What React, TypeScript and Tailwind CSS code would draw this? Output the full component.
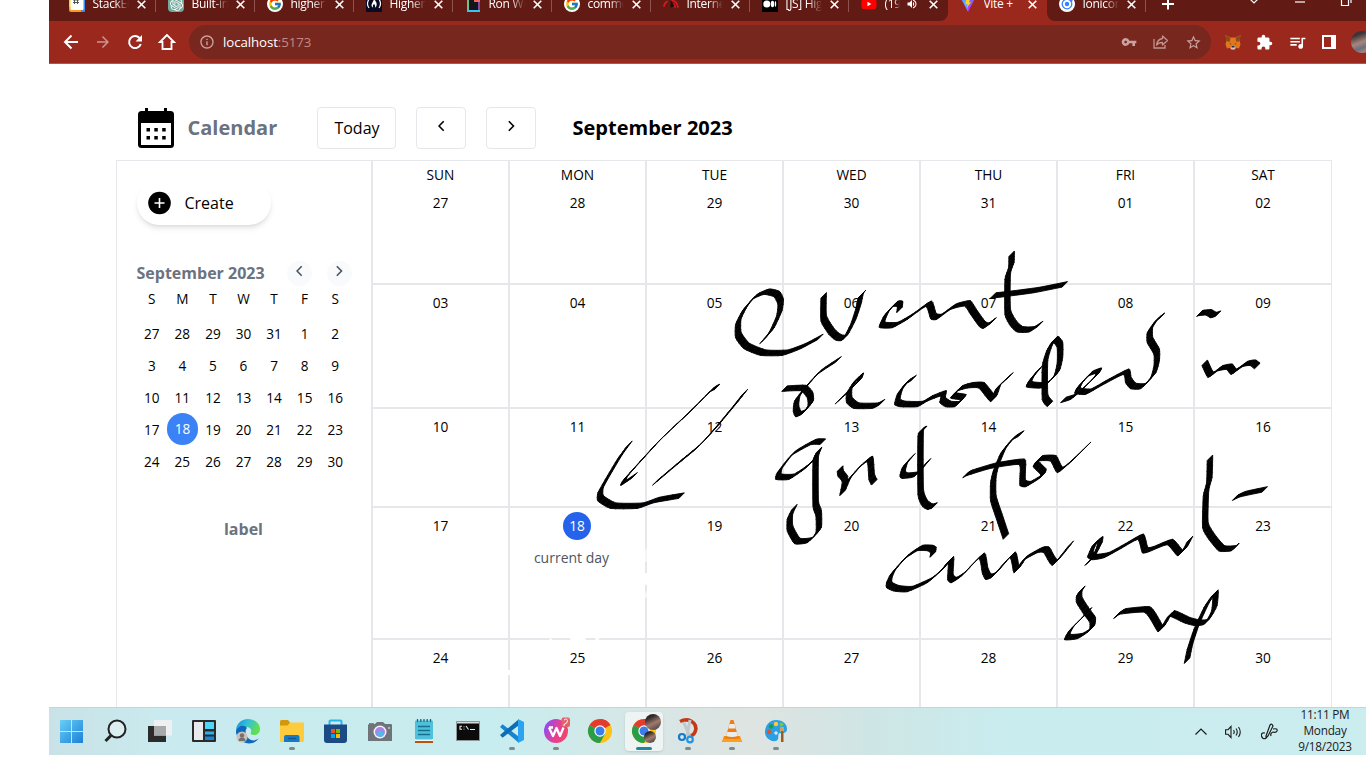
import React from "react";
import { FcGoogle } from "react-icons/fc";
import { FaYoutube } from "react-icons/fa";
import { SiOpenai } from "react-icons/si";
import {
  MdArrowForward,
  MdVpnKey,
  MdStarBorder,
  MdExtension,
  MdQueueMusic,
  MdOutlineInfo,
  MdVolumeUp,
} from "react-icons/md";

type Point = [number, number];

/* ---------- Browser chrome ---------- */

const StackEditIcon = () => (
  <svg width="16" height="16" viewBox="0 0 16 16">
    <rect width="16" height="16" rx="2" fill="#fb9a1d" />
    <path d="M0 2h3v9H0z" fill="#fbd21d" />
    <path d="M12 4h4v10a2 2 0 0 1-2 2h-2z" fill="#3f8df0" />
    <rect x="1.500" y="0" width="13" height="14" rx="1" fill="#fff" />
    <path d="M5.500 2v6M8.500 2v6M4 4h6M4 6.500h6" stroke="#555" strokeWidth="1" />
  </svg>
);

const FccIcon = () => (
  <svg width="16" height="16" viewBox="0 0 16 16">
    <rect width="16" height="16" fill="#0a0a23" />
    <path d="M3 3Q0 8 3 12M13 3Q16 8 13 12" fill="none" stroke="#fff" strokeWidth="1.200" />
    <path d="M8 3c2.500 3 3.500 5 2 8l-1.200.5q1-2-.8-3.500-1.800 1.500-.8 3.500L6 11c-1.500-3 1-4 2-8" fill="#fff" />
  </svg>
);

const PageIcon = () => (
  <svg width="13" height="16" viewBox="0 0 13 16">
    <rect width="13" height="16" fill="#36c5f0" />
    <path d="M0 0h2v14H0z" fill="#6cc08b" />
    <path d="M11 0h2v14h-2z" fill="#7a4fa3" />
    <path d="M2 0h9v14H2z" fill="#16161a" />
    <path d="M7 2h6v4H7z" fill="#f0686c" />
  </svg>
);

const GaugeIcon = () => (
  <svg width="17" height="16" viewBox="0 0 17 16">
    <path d="M1 11a7 7 0 0 1 4-6M8 4a8 8 0 0 1 8 8M8 7a5 5 0 0 1 5 5" fill="none" stroke="#e0181e" strokeWidth="1.800" />
    <path d="M8 3v9l4-2z" fill="#111" />
  </svg>
);

const MediumIcon = () => (
  <svg width="16" height="16" viewBox="0 0 16 16">
    <rect width="16" height="16" fill="#000" />
    <circle cx="4.800" cy="8" r="3.500" fill="#fff" />
    <ellipse cx="10.500" cy="8" rx="1.700" ry="3.200" fill="#fff" />
    <ellipse cx="13.500" cy="8" rx=".7" ry="3" fill="#fff" />
  </svg>
);

const ViteIcon = () => (
  <svg width="16" height="16" viewBox="0 0 16 16">
    <path d="M.5 1.500 8 15.500l7.500-14L8.500 3z" fill="#8b5cf6" />
    <path d="M.5 1.500 8 15.500l1-6L4 2z" fill="#5aa5ff" />
    <path d="M8 15.500l3-6-4-1z" fill="#bd34fe" />
    <path d="M11 .5 6 2l-.5 6.500 2-.500L7 12l4-6-2 .500z" fill="#ffd028" />
  </svg>
);

const IonicIcon = () => (
  <svg width="16" height="16" viewBox="0 0 16 16">
    <circle cx="8" cy="8" r="8" fill="#fff" />
    <circle cx="8" cy="8" r="4.800" fill="none" stroke="#3880ff" strokeWidth="1.300" />
    <circle cx="8" cy="8" r="2.200" fill="#3880ff" />
    <circle cx="12.300" cy="4.500" r="1.300" fill="#3880ff" />
  </svg>
);

const CloseIcon = () => (
  <svg width="9" height="9" viewBox="0 0 9 9" className="shrink-0">
    <path d="M.7.7l7.600 7.600M8.300.7.700 8.300" stroke="#fff" strokeWidth="1.600" />
  </svg>
);

const GoogleIcon = () => (
  <span className="flex size-4 items-center justify-center rounded-full bg-white">
    <FcGoogle size={14} />
  </span>
);

const tabs: { title: string; icon: React.ReactNode; active?: boolean; audible?: boolean }[] = [
  { title: "StackEdit", icon: <StackEditIcon /> },
  {
    title: "Built-in",
    icon: (
      <span className="flex size-4 items-center justify-center rounded-sm bg-[#74aa9c]">
        <SiOpenai size={13} color="#fff" />
      </span>
    ),
  },
  { title: "higher o", icon: <GoogleIcon /> },
  { title: "Higher O", icon: <FccIcon /> },
  { title: "Ron Wil", icon: <PageIcon /> },
  { title: "commo", icon: <GoogleIcon /> },
  { title: "Internet", icon: <GaugeIcon /> },
  { title: "[JS] High", icon: <MediumIcon /> },
  { title: "(19)", icon: <FaYoutube size={16} color="#ff0000" className="bg-[linear-gradient(#fff,#fff)] bg-[length:6px_6px] bg-center bg-no-repeat" />, audible: true },
  { title: "Vite +", icon: <ViteIcon />, active: true },
  { title: "Ionicons", icon: <IonicIcon /> },
];

const TabStrip = () => (
  <div className="flex h-[21px] items-end overflow-hidden bg-[#9b281d]">
    <div className="h-[34px] w-2 shrink-0 bg-[#611a14]" />
    {tabs.map((t, i) => {
      const plain = !t.active && i !== 8;
      return (
        <div
          key={i}
          className={
            "flex h-[34px] w-[99px] shrink-0 items-center pl-3 " +
            (t.active
              ? "bg-[#9b281d]"
              : i === 8
                ? "rounded-br-lg bg-[#611a14]"
                : i === 10
                  ? "rounded-bl-lg bg-[#611a14]"
                  : "bg-[#611a14]")
          }
        >
          <span className="flex w-4 shrink-0 justify-center">{t.icon}</span>
          <span
            className={
              "ml-[7.500px] shrink-0 overflow-hidden text-[12px] leading-4 tracking-[-0.300px] whitespace-nowrap text-white " +
              (t.audible ? "w-[15px] " : "w-9 ") +
              (t.active ? "" : "[mask-image:linear-gradient(90deg,#000_60%,transparent)]")
            }
          >
            {t.title}
          </span>
          {t.audible && <MdVolumeUp size={12} color="#fff" className="ml-[6px] shrink-0" />}
          <span className={t.audible ? "ml-[11px]" : "ml-[8px]"}>
            <CloseIcon />
          </span>
          {plain && <span className="mb-1 ml-auto h-5 w-px bg-[#8d534e]" />}
        </div>
      );
    })}
    <div className="flex h-[34px] flex-1 bg-[#611a14]">
      <svg className="ml-[15px] h-[34px] shrink-0" width="14" viewBox="0 0 14 34">
        <path d="M7 10.500v12M1 17h12" stroke="#fff" strokeWidth="2" />
      </svg>
      <svg className="ml-[74px] h-[34px] shrink-0" width="110" viewBox="0 0 110 34">
        <path d="M1 12l4 4 4-4" fill="none" stroke="#fff" strokeWidth="1.200" />
        <path d="M46 15h10" stroke="#fff" strokeWidth="1.200" />
        <path d="M92.500 11.500h7v7h-7zM95 9h7v7" fill="none" stroke="#fff" strokeWidth="1.200" />
      </svg>
    </div>
  </div>
);

const ShareIcon = () => (
  <svg width="16" height="14" viewBox="0 0 16 14" fill="none" stroke="#bd958f" strokeWidth="1.300">
    <path d="M1 4v9h11v-3" />
    <path d="M9.500 1l5 4.500-5 4.500V7.500C6.500 7.500 5 8 3.500 10 4 6 6.500 4 9.500 3.500z" strokeLinejoin="round" />
  </svg>
);

const FoxIcon = () => (
  <svg width="16" height="16" viewBox="0 0 16 16">
    <path d="M.5 1l5 2.500h5l5-2.500-.8 6 .8 3.500-1.500 4-3-.7-1.500 1.700h-3L5 13.800l-3 .7-1.500-4L1.300 7z" fill="#e2761b" />
    <path d="M.5 1l5 3L4.500 8 1.300 7zM15.500 1l-5 3 1 4 3.200-1z" fill="#8b4a1d" />
    <path d="M6 12h4l.5 2.500L9.500 15.500h-3L5.500 14.500z" fill="#d7c1b3" />
    <path d="M6.500 12h3v1.500h-3zM4.500 9.300l2 .7-1 .6zM11.500 9.300l-2 .7 1 .6z" fill="#233447" />
  </svg>
);

const Toolbar = () => (
  <div className="flex h-[43px] items-center border-b border-[#b0584f] bg-[#9b281d]">
    <div className="flex w-[140px] shrink-0 items-center gap-[14px] pl-[13px] text-white">
      <svg width="18" height="18" viewBox="0 0 18 18" fill="none" stroke="#fff" strokeWidth="2">
        <path d="M16 9H3.500M9.500 2.500L3 9l6.500 6.500" />
      </svg>
      <MdArrowForward size={18} className="opacity-50" />
      <svg width="18" height="18" viewBox="0 0 18 18">
        <path d="M13.500 5A6 6 0 1 0 14.800 11" fill="none" stroke="#fff" strokeWidth="2" />
        <path d="M16 2v6.500H9.500z" fill="#fff" />
      </svg>
      <svg width="18" height="18" viewBox="0 0 18 18">
        <path d="M9 2L2 9h2.500v7h9V9H16z" fill="none" stroke="#fff" strokeWidth="1.800" />
      </svg>
    </div>
    <div className="flex h-[34px] w-[1022px] shrink-0 items-center rounded-full bg-[#78271f] pl-[10px]">
      <MdOutlineInfo size={16} color="#c9a5a1" />
      <span className="ml-2 w-[898px] text-[13.300px] leading-4 tracking-[-0.1px] text-white">
        localhost<span className="text-[#c08a85]">:5173</span>
      </span>
      <div className="flex items-center gap-4 text-[#c8a39f]">
        <MdVpnKey size={16} />
        <ShareIcon />
        <MdStarBorder size={17} />
      </div>
    </div>
    <div className="ml-[14px] flex shrink-0 items-center gap-[15px] text-white">
      <FoxIcon />
      <MdExtension size={17} />
      <MdQueueMusic size={19} />
      <span className="h-[14px] w-[14px] border-2 border-r-[5px] border-white" />
      <span className="size-[22px] shrink-0 rounded-full bg-[linear-gradient(160deg,#3a3338_20%,#a8857c_50%,#6b6f7e_70%,#d79a7e)]" />
    </div>
  </div>
);

/* ---------- Calendar ---------- */

const Chevron = ({ dir, color = "#000" }: { dir: "left" | "right"; color?: string }) => (
  <svg width="7" height="12" viewBox="0 0 7 12" fill="none" stroke={color} strokeWidth="1.600">
    <path d={dir === "left" ? "M5.700 1.200L1 6l4.700 4.800" : "M.8 1.200L5.500 6 .8 10.800"} />
  </svg>
);

const CalendarIcon = () => (
  <svg width="36" height="40" viewBox="0 0 36 40">
    <path d="M7 0h3v4H7zM26 0h3v4h-3z" />
    <rect y="3" width="36" height="37" rx="3.500" />
    <path d="M3 15h30v22H3z" fill="#fff" />
    <path d="M8.500 20H12v3.500H8.500zM16.300 20h3.500v3.500h-3.500zM24.200 20h3.500v3.500h-3.500zM8.500 28H12v3.500H8.500zM16.300 28h3.500v3.500h-3.500zM24.200 28h3.500v3.500h-3.500z" />
  </svg>
);

const Header = () => (
  <div className="flex h-[96px] shrink-0 items-start pt-[43px] pl-[89px]">
    <div className="flex h-[42px] items-center">
      <CalendarIcon />
      <h1 className="ml-[13.500px] w-[129.500px] text-xl font-bold text-[#6b7280]">Calendar</h1>
      <button className="h-[42px] w-[79px] rounded border border-gray-200 pl-px text-base">Today</button>
      <button className="ml-5 flex h-[42px] w-[50px] items-center justify-center rounded border border-gray-200 pb-1">
        <Chevron dir="left" />
      </button>
      <button className="ml-5 flex h-[42px] w-[50px] items-center justify-center rounded border border-gray-200 pb-1">
        <Chevron dir="right" />
      </button>
      <h2 className="ml-[36.500px] text-xl font-bold whitespace-nowrap">September 2023</h2>
    </div>
  </div>
);

const miniDays = [
  27, 28, 29, 30, 31, 1, 2, 3, 4, 5, 6, 7, 8, 9, 10, 11, 12, 13, 14, 15, 16, 17, 18, 19, 20, 21, 22, 23, 24, 25, 26, 27,
  28, 29, 30,
];

const Sidebar = () => (
  <aside className="w-[256px] shrink-0 border-t border-r border-l border-gray-200 pt-5 pl-[19.500px]">
    <button className="flex h-11 w-[134px] items-center rounded-full pl-[11px] shadow-md">
      <svg width="23" height="24" viewBox="0 0 23 24">
        <circle cx="11.500" cy="12" r="11.300" />
        <path d="M11.500 7v10M6.500 12h10" stroke="#fff" strokeWidth="1.600" />
      </svg>
      <span className="ml-[14px] text-base">Create</span>
    </button>
    <div className="mt-9 flex h-[25px] items-center">
      <h3 className="w-[150px] pb-0.5 text-base font-bold whitespace-nowrap text-[#6b7280]">September 2023</h3>
      <span className="flex size-[25px] items-center justify-center rounded-full bg-gray-50 pb-[5px]">
        <Chevron dir="left" color="#4b5563" />
      </span>
      <span className="ml-[15px] flex size-[25px] items-center justify-center rounded-full bg-gray-50 pb-[5px]">
        <Chevron dir="right" color="#4b5563" />
      </span>
    </div>
    <div className="grid w-[214px] grid-cols-7 text-center text-[13.600px] leading-[25px]">
      {["S", "M", "T", "W", "T", "F", "S"].map((d, i) => (
        <span key={i}>{d}</span>
      ))}
    </div>
    <div className="mt-[6px] grid w-[214px] auto-rows-[32px] grid-cols-7 text-center text-[13.600px] leading-8">
      {miniDays.map((d, i) => (
        <span key={i} className={d === 18 ? "h-8 w-[31px] rounded-full bg-[#3b82f6] text-white" : "pt-px"}>
          {d}
        </span>
      ))}
    </div>
    <p className="mt-[40px] w-[214px] text-center text-base font-bold text-[#6b7280]">label</p>
  </aside>
);

const weekdays = ["SUN", "MON", "TUE", "WED", "THU", "FRI", "SAT"];
const gridDays = [
  "27", "28", "29", "30", "31", "01", "02",
  "03", "04", "05", "06", "07", "08", "09",
  "10", "11", "12", "13", "14", "15", "16",
  "17", "18", "19", "20", "21", "22", "23",
  "24", "25", "26", "27", "28", "29", "30",
];

const MonthGrid = () => (
  <div className="grid w-[960px] shrink-0 grid-cols-[repeat(6,137px)_138px] grid-rows-[124px_124px_99px_132px_120px]">
    {gridDays.map((d, i) => (
      <div key={i} className="flex flex-col items-center border border-gray-200 pt-1 text-[13.700px]">
        {i < 7 && <span className="mb-2 leading-5">{weekdays[i]}</span>}
        {d === "18" ? (
          <>
            <span className="mr-px flex size-7 items-center justify-center rounded-full bg-[#2563eb] font-medium text-white">
              {d}
            </span>
            <span className="mt-2 mr-3 text-[14px] leading-5 text-[#4b5563]">current day</span>
          </>
        ) : (
          <span className={i < 7 ? "leading-5" : "leading-7"}>{d}</span>
        )}
      </div>
    ))}
  </div>
);

/* ---------- Ink annotations: a slanted nib swept along each stroke ---------- */

const inkLeft: Point[][] = [
  [[510, 312], [545, 270], [568, 220], [572, 185], [560, 162], [530, 155], [495, 170], [465, 205], [445, 245], [445, 285], [470, 318], [520, 338], [585, 338], [640, 318], [700, 286]],
  [[701, 163], [701, 235], [725, 275], [745, 292], [765, 292], [790, 245], [805, 200], [812, 168], [826, 150]],
  [[580, 446], [640, 444], [660, 465], [662, 490], [642, 515], [625, 522], [618, 505], [622, 475], [650, 438], [690, 395], [755, 352]],
  [[735, 492], [790, 440], [808, 420], [812, 407], [798, 420], [778, 452], [778, 480], [800, 497], [855, 497], [885, 482]],
  [[390, 436], [365, 450], [300, 515], [210, 600], [110, 710], [101, 728], [143, 700]],
  [[472, 447], [430, 500], [380, 560], [330, 615], [270, 665], [187, 735]],
  [[125, 602], [90, 650], [60, 700], [32, 750], [32, 775], [70, 797], [150, 797], [200, 780], [280, 766]],
  [[702, 605], [670, 606], [610, 640], [570, 690], [566, 710], [605, 710], [650, 680], [675, 655], [688, 628]],
  [[690, 622], [677, 660], [677, 790], [686, 820], [686, 870], [660, 900], [622, 903], [600, 865], [600, 830], [617, 793]],
  [[750, 684], [752, 700], [765, 718], [758, 758], [775, 720], [810, 680], [840, 657], [845, 710], [853, 727]],
];

const inkUpper: Point[][] = [
  [[88, 214], [90, 192], [75, 192], [50, 220], [38, 245], [38, 255], [75, 255], [120, 230], [176, 191], [190, 228], [208, 230], [250, 200], [292, 190], [310, 215], [335, 250], [348, 257], [380, 235]],
  [[425, 38], [424, 75], [413, 110], [413, 215], [430, 250], [450, 268], [485, 268], [520, 246]],
  [[365, 167], [410, 162], [500, 150], [590, 132]],
  [[140, 408], [110, 428], [90, 455], [82, 485], [100, 492], [150, 492], [180, 475], [220, 460], [218, 480], [235, 492], [262, 492], [280, 472], [250, 466], [270, 445], [300, 436], [335, 436], [370, 477], [385, 440], [430, 398]],
  [[515, 378], [485, 415], [478, 433], [525, 435], [560, 400], [570, 360], [570, 315], [555, 297], [538, 325], [525, 370], [525, 470], [540, 492]],
  [[573, 482], [610, 470], [640, 445], [680, 405], [686, 392], [660, 402], [630, 435], [623, 452], [655, 455], [700, 430], [768, 395], [775, 420], [790, 438], [820, 438], [850, 405], [860, 370], [860, 335], [840, 300], [840, 270], [860, 240], [885, 220]],
  [[985, 224], [992, 219], [1016, 217], [1030, 225], [1051, 219]],
  [[1004, 368], [1022, 404], [1050, 385], [1078, 380], [1092, 395], [1125, 372], [1148, 368], [1162, 378]],
];

const inkLower: Point[][] = [
  [[135, 100], [105, 135], [98, 160], [105, 167], [140, 162], [182, 115]],
  [[170, 18], [152, 40], [152, 215], [165, 250], [180, 260], [200, 255]],
  [[463, 35], [430, 55], [400, 92], [378, 145], [370, 180], [370, 235], [388, 290], [408, 350]],
  [[278, 170], [300, 158], [370, 137], [455, 125], [458, 160], [458, 188], [475, 192], [515, 168], [520, 155], [498, 132], [510, 115], [550, 115], [570, 150], [610, 118], [663, 66]],
  [[188, 408], [190, 390], [180, 384], [150, 384], [110, 410], [70, 455], [58, 480], [58, 495], [80, 505], [120, 507], [180, 480], [220, 445], [243, 418], [241, 470], [252, 480], [280, 462], [335, 407], [345, 450], [355, 470], [375, 462], [428, 404], [440, 450], [465, 415], [510, 390], [530, 390], [555, 428], [610, 362]],
  [[645, 437], [670, 410], [688, 375], [690, 358], [674, 372], [661, 403], [675, 411], [710, 405], [760, 378], [812, 350], [825, 390], [845, 387], [900, 366], [930, 399], [945, 385], [965, 348]],
  [[1020, 110], [1018, 180], [1008, 220], [1006, 315], [1025, 350], [1055, 385], [1090, 385], [1108, 370]],
  [[1087, 237], [1120, 222], [1190, 207]],
  [[643, 497], [628, 520], [628, 540], [650, 575], [668, 600], [665, 625], [630, 648], [592, 651], [605, 625], [640, 590], [665, 562]],
  [[730, 593], [760, 574], [830, 568], [850, 590], [872, 627], [885, 610], [905, 580], [950, 600], [980, 608], [1010, 605], [1033, 565], [1036, 518], [1010, 555], [980, 620], [960, 680], [950, 728]],
];

const NIB: Point = [8.300, -8.300];

/* Pulls a terminal back where the stroke runs along the nib, so the nib tip lands on the end point. */
const trimEnd = (end: Point, inner: Point): Point => {
  const dx = inner[0] - end[0];
  const dy = inner[1] - end[1];
  const len = Math.hypot(dx, dy) || 1;
  const along = Math.abs((dx * NIB[0] + dy * NIB[1]) / (len * Math.hypot(NIB[0], NIB[1])));
  const pull = Math.min(len * 0.6, Math.hypot(NIB[0], NIB[1]) * along ** 4);
  return [end[0] + (dx / len) * pull, end[1] + (dy / len) * pull];
};

const smooth = (raw: Point[]): Point[] => {
  const n = raw.length;
  const p = [...raw];
  p[0] = trimEnd(raw[0], raw[1]);
  p[n - 1] = trimEnd(raw[n - 1], raw[n - 2]);
  const out: Point[] = [p[0]];
  for (let i = 0; i < n - 1; i++) {
    const a = p[Math.max(0, i - 1)];
    const b = p[i];
    const c = p[i + 1];
    const d = p[Math.min(n - 1, i + 2)];
    for (let k = 1; k <= 4; k++) {
      const t = k / 4;
      const at = (j: 0 | 1) => {
        const m0 = (c[j] - a[j]) * 0.25;
        const m1 = (d[j] - b[j]) * 0.25;
        const t2 = t * t;
        const t3 = t2 * t;
        return (2 * t3 - 3 * t2 + 1) * b[j] + (t3 - 2 * t2 + t) * m0 + (3 * t2 - 2 * t3) * c[j] + (t3 - t2) * m1;
      };
      out.push([at(0), at(1)]);
    }
  }
  return out;
};

const InkStroke = ({ points }: { points: Point[] }) => {
  const p = smooth(points);
  return (
    <>
      {p.slice(1).map((b, i) => {
        const a = p[i];
        const corners = [
          [a[0] + NIB[0], a[1] + NIB[1]],
          [b[0] + NIB[0], b[1] + NIB[1]],
          [b[0] - NIB[0], b[1] - NIB[1]],
          [a[0] - NIB[0], a[1] - NIB[1]],
        ];
        return <polygon key={i} points={corners.map((c) => c.join(",")).join(" ")} />;
      })}
    </>
  );
};

const InkLayer = () => (
  <svg className="pointer-events-none absolute top-0 left-0" width="1366" height="707" viewBox="0 0 1366 707">
    <g fill="#fff">
      <ellipse cx="646" cy="579" rx="3" ry="6" />
      <path d="M644 551l4-4v14l-4 2zM644 596l4-8v8l-4 4z" opacity=".6" />
      <ellipse cx="578" cy="639" rx="8" ry="2.500" />
      <path d="M550 637l3 4h-4zM596 637h4l-2 4h-3zM507 670h4v5h-4z" />
    </g>
    <g fill="#000" stroke="#000" strokeWidth="2.600" strokeLinejoin="round">
      <g transform="translate(590 240) scale(.33333)">{inkLeft.map((s, i) => <InkStroke key={i} points={s} />)}</g>
      <g transform="translate(870 240) scale(.33333)">{inkUpper.map((s, i) => <InkStroke key={i} points={s} />)}</g>
      <g transform="translate(870 420) scale(.33333)">{inkLower.map((s, i) => <InkStroke key={i} points={s} />)}</g>
    </g>
  </svg>
);

/* ---------- Taskbar ---------- */

const ChromeGlyph = () => (
  <>
    <circle cx="12" cy="12" r="12" fill="#fbc116" />
    <path d="M12 12L1.600 6A12 12 0 0 1 22.400 6z" fill="#e33b2e" />
    <path d="M12 0a12 12 0 0 1 10.400 6H12z" fill="#e33b2e" />
    <path d="M1.600 6A12 12 0 0 0 12 24l5-9-5-3z" fill="#2a9d4a" />
    <circle cx="12" cy="12" r="5.700" fill="#fff" />
    <circle cx="12" cy="12" r="4.500" fill="#3b7ded" />
  </>
);

const apps: { icon: React.ReactNode; running?: boolean; focused?: boolean }[] = [
  {
    icon: (
      <>
        <defs>
          <linearGradient id="win" gradientUnits="userSpaceOnUse" x1="0" y1="0" x2="24" y2="24">
            <stop stopColor="#6ad0f8" />
            <stop offset="1" stopColor="#1b7fd6" />
          </linearGradient>
        </defs>
        <path d="M0 1h11v11H0zM12 1h11v11H12zM0 13h11v11H0zM12 13h11v11H12z" fill="url(#win)" />
      </>
    ),
  },
  {
    icon: (
      <>
        <circle cx="13" cy="10" r="8.500" fill="#dceff0" stroke="#222" strokeWidth="2" />
        <path d="M7 16.500L1.500 22" stroke="#222" strokeWidth="3" />
      </>
    ),
  },
  {
    icon: (
      <>
        <path d="M0 7h18v16H0z" fill="#2b2b2b" />
        <path d="M6 1h18v15.500H6z" fill="#eef0f1" />
        <path d="M6 7h12v9.500H6z" fill="#a7a9aa" />
      </>
    ),
  },
  {
    icon: (
      <>
        <rect y="1" width="24" height="22" rx="1" fill="#2a2a2a" />
        <path d="M2 3h9v18H2z" fill="#e8eaee" />
        <path d="M13 3h9v7h-9z" fill="#50d5f8" />
        <path d="M13 12.500h9v3h-9z" fill="#2cb1ee" />
        <path d="M13 17.500h9V21h-9z" fill="#1487e0" />
      </>
    ),
  },
  {
    icon: (
      <>
        <defs>
          <linearGradient id="edge" x1="0" y1="0" x2="1" y2=".4">
            <stop stopColor="#1689d4" />
            <stop offset=".5" stopColor="#35c1d8" />
            <stop offset="1" stopColor="#5fe04f" />
          </linearGradient>
        </defs>
        <path d="M0 12C0 5 5 0 12 0s12 5 12 10c0 4-3 6-6 6s-4-1-3-3c1-3-2-5-5-5-5 0-8 4-10 7z" fill="url(#edge)" />
        <path d="M0 12c2-5 8-7 11-3-3 3-1 10 4 12 3 1 6 0 8-2-3 5-10 7-16 4-4-2-7-6-7-11z" fill="#0f67bb" />
        <circle cx="6" cy="18" r="5.500" fill="#c9c2bc" />
        <circle cx="6" cy="16.500" r="2.200" fill="#77706c" />
        <path d="M2.500 22a3.500 3.500 0 0 1 7 0z" fill="#77706c" />
      </>
    ),
  },
  {
    running: true,
    icon: (
      <>
        <path d="M0 2.500A1.500 1.500 0 0 1 1.500 1H8l2 2.500V7H0z" fill="#d5960b" />
        <path d="M0 6.500h7.500L10 3.500h13a1 1 0 0 1 1 1V22a1 1 0 0 1-1 1H1a1 1 0 0 1-1-1z" fill="#fdcb3b" />
        <path d="M4 23v-5a2 2 0 0 1 2-2h11.500a2 2 0 0 1 2 2v5z" fill="#1679c5" />
        <path d="M8 19.500h8" stroke="#0d5698" strokeWidth="1.300" />
      </>
    ),
  },
  {
    icon: (
      <>
        <path d="M5.500 6V2.500a1 1 0 0 1 1-1h10a1 1 0 0 1 1 1V6" fill="none" stroke="#27b8ee" strokeWidth="2" />
        <path d="M0 5.500h23V21a3 3 0 0 1-3 3H3a3 3 0 0 1-3-3z" fill="#1c4a85" />
        <path d="M7 10h4v4H7z" fill="#f25022" />
        <path d="M12 10h4v4h-4z" fill="#7fba00" />
        <path d="M7 15h4v4H7z" fill="#00a4ef" />
        <path d="M12 15h4v4h-4z" fill="#ffb900" />
      </>
    ),
  },
  {
    icon: (
      <>
        <path d="M1 4h5v3H1z" fill="#2d9fdc" />
        <path d="M7 5l2-2h6l2 2h6a1 1 0 0 1 1 1v16H0V6l1-1z" fill="#6f747a" />
        <circle cx="12" cy="13" r="6.500" fill="#f4f4f6" />
        <circle cx="12" cy="13" r="5" fill="#a386e8" />
        <circle cx="12.500" cy="15" r="3" fill="#55b8ec" />
        <path d="M20 8h2v2h-2z" fill="#b4b8bc" />
      </>
    ),
  },
  {
    icon: (
      <>
        <path d="M3 21h18v3H3z" fill="#b5560f" />
        <path d="M3 20h18v2H3z" fill="#f5f5f5" />
        <rect x="3" y="1.500" width="18" height="19" rx="1" fill="#4fc0dc" />
        <path d="M5.500 0v3M8.800 0v3M12 0v3M15.200 0v3M18.500 0v3" stroke="#176a80" strokeWidth="1.300" />
        <path d="M6 7.500h12M6 11.500h12M6 15.500h12" stroke="#14708a" strokeWidth="1.500" />
      </>
    ),
  },
  {
    icon: (
      <>
        <path d="M.500 2.500h23v19H.500z" fill="#0b0b0b" stroke="#8e9698" strokeWidth="1" />
        <path d="M1 3h22v1.500H1z" fill="#d7d9da" />
        <path d="M6 7.200H4v3h2M8 7.500v.8M8 9.700v.8M10 7l2.500 3.500M14 10.500h5" fill="none" stroke="#e9e9e9" strokeWidth="1.100" />
      </>
    ),
  },
  {
    running: true,
    icon: (
      <>
        <path d="M2.500 5.200L18.500 17.500v6L0 8z" fill="#1585cf" />
        <path d="M2.500 18.800L18.500 6.500v-6L0 16z" fill="#0f6db5" />
        <path d="M18 0l6 3v18l-6 3z" fill="#2aa4f0" />
      </>
    ),
  },
  {
    running: true,
    icon: (
      <>
        <defs>
          <linearGradient id="wps" x1="0" y1=".3" x2="1" y2=".7">
            <stop stopColor="#8c4bf5" />
            <stop offset=".5" stopColor="#e0409c" />
            <stop offset="1" stopColor="#fa4262" />
          </linearGradient>
        </defs>
        <circle cx="12" cy="12" r="12" fill="url(#wps)" />
        <path d="M5 8.500l4 8.500 3.500-8L16 17l3.500-8.500M5 8.500h4" fill="none" stroke="#fff" strokeWidth="2.300" strokeLinejoin="round" />
        <rect x="17.500" y="-1.500" width="8.500" height="9.500" rx="2" fill="#e2646a" />
        <path d="M20 1q3-2 3.500.5T20 5.500v1.500" fill="none" stroke="#fff" strokeWidth="1" />
      </>
    ),
  },
  { icon: <ChromeGlyph /> },
  {
    running: true,
    focused: true,
    icon: (
      <>
        <defs>
          <linearGradient id="face" x1=".2" y1="0" x2=".7" y2="1">
            <stop offset=".2" stopColor="#2e282b" />
            <stop offset=".6" stopColor="#a07a6c" />
            <stop offset="1" stopColor="#4b4648" />
          </linearGradient>
        </defs>
        <ChromeGlyph />
        <circle cx="21" cy="3" r="8" fill="url(#face)" />
        <circle cx="18" cy="18" r="6" fill="url(#face)" />
      </>
    ),
  },
  {
    running: true,
    icon: (
      <>
        <path d="M4 2.500q6-3 11-.5 7 4 4 11-1 3-5 4" fill="none" stroke="#c43a16" strokeWidth="3.600" />
        <path d="M14 1l-3 16M7.500 3L14 18" stroke="#c4c8ca" strokeWidth="3" />
        <circle cx="6" cy="18" r="3" fill="none" stroke="#1878cc" strokeWidth="2.200" />
        <circle cx="14" cy="20.500" r="2.800" fill="none" stroke="#2494e0" strokeWidth="2.200" />
      </>
    ),
  },
  {
    running: true,
    icon: (
      <>
        <path d="M4 17h16l2 6H2z" fill="#f58a0c" />
        <path d="M10.500 1h3l5 18q-6.500 3-13 0z" fill="#f07d12" />
        <path d="M9.500 5h5l1.200 4.500H8.300zM7.300 13h9.400l1.200 4q-6 2-11.800 0z" fill="#e9edef" />
        <path d="M1.500 23l2-3h17l2 3z" fill="#ffa01c" />
      </>
    ),
  },
  {
    running: true,
    icon: (
      <>
        <path d="M12 1c7 0 11 4 11 9 0 4-3 4-6 4-4 0-2 3-3 6-2 5-14 1-13-8C2 5 6 1 12 1z" fill="#2a9fe3" />
        <circle cx="12" cy="5" r="2.200" fill="#ffc83d" />
        <circle cx="7" cy="7.500" r="2.200" fill="#1a9c4c" />
        <circle cx="5" cy="13" r="2.200" fill="#d8542c" />
        <circle cx="17.500" cy="5.500" r="2" fill="#7dc828" />
        <path d="M16 8h4v5h-4z" fill="#d0a060" />
        <path d="M17 12h2.500v11H17z" fill="#9b5a20" />
        <path d="M12 12v4M10 14h4" stroke="#fff" strokeWidth="1" />
      </>
    ),
  },
];

const Taskbar = () => (
  <footer className="flex h-12 shrink-0 items-center border-t border-[#c0d6d8] bg-[linear-gradient(90deg,#c9e2e7_0%,#c9eaee_8%,#c8edef_34%,#d8e6e5_46%,#dee4e1_54%,#cfe5e5_62%,#c9ecee_72%,#cbedee_100%)] pl-px">
    {apps.map((a, i) => (
      <div key={i} className="flex h-full w-11 shrink-0 justify-center">
        <div
          className={
            "mt-1 flex h-[39px] w-[38px] flex-col items-center rounded pt-[7px] " +
            (a.focused ? "bg-[#eef4f4] shadow-sm" : "")
          }
        >
          <svg width="24" height="24" viewBox="0 0 24 24" className="shrink-0 overflow-visible">
            {a.icon}
          </svg>
          {a.running && (
            <span
              className={
                a.focused
                  ? "mt-1 h-[3px] w-4 shrink-0 rounded-full bg-[#23859a]"
                  : "mt-1 h-[3px] w-1.5 shrink-0 rounded-full bg-[#7d898a]"
              }
            />
          )}
        </div>
      </div>
    ))}
    <div className="ml-auto flex shrink-0 items-center">
      <svg width="12" height="7" viewBox="0 0 12 7" fill="none" stroke="#1b1b1b" strokeWidth="1.200">
        <path d="M.5 6.500L6 1l5.500 5.500" />
      </svg>
      <svg className="ml-[18px]" width="17" height="14" viewBox="0 0 17 14" fill="none" stroke="#1b1b1b" strokeWidth="1.100">
        <path d="M.6 4.700H3L6 1.500v11L3 9.300H.6zM8.500 5q1.500 2 0 4M11 3.500q2.500 3.500 0 7M13.500 2q3.500 5 0 10" />
      </svg>
      <svg className="ml-[19px]" width="17" height="17" viewBox="0 0 17 17" fill="none" stroke="#1b1b1b" strokeWidth="1.200">
        <path d="M5 13L9 2q2-2 3 1L7 13l-2 2zM4 10q-4-1-3.500 3 1 4 5 2M12 6q5-1 4 2-1 2-4 1-3 1-2 4" />
      </svg>
      <div className="mr-[11px] mb-[3px] ml-[17px] w-[60px] text-center text-[11.800px] leading-4 tracking-[-0.250px] whitespace-nowrap text-[#1b1b1b]">
        <div>11:11 PM</div>
        <div>Monday</div>
        <div>9/18/2023</div>
      </div>
    </div>
  </footer>
);

export default function App() {
  return (
    <div className="relative flex h-[768px] w-[1366px] flex-col overflow-hidden bg-white pl-[49px] font-['Open_Sans','Noto_Sans',sans-serif] text-black">
      <header className="shrink-0 overflow-hidden">
        <TabStrip />
        <Toolbar />
      </header>
      <main className="flex h-[643px] shrink-0 flex-col overflow-hidden">
        <Header />
        <div className="flex min-h-0 flex-1 pl-[67px]">
          <Sidebar />
          <MonthGrid />
        </div>
      </main>
      <Taskbar />
      <InkLayer />
    </div>
  );
}
